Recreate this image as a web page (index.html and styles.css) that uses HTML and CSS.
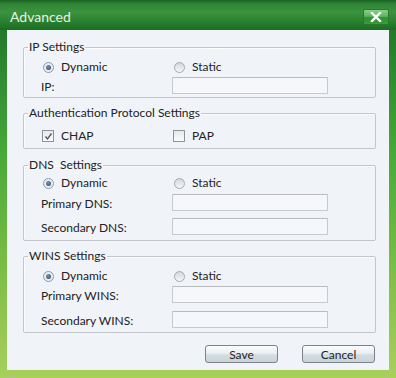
FILE: index.html
```html
<!DOCTYPE html>
<html lang="en">
<head>
    <meta charset="UTF-8">
    <meta name="viewport" content="width=device-width, initial-scale=1.0">
    <title>Advanced</title>
    <link rel="stylesheet" href="styles.css">
</head>
<body>
    <div class="dialog">
        <div class="titlebar">
            <span class="title">Advanced</span>
            <button class="close" type="button">
                <svg width="12" height="10" viewBox="0 0 12 10">
                    <path d="M2 1 L10 9 M10 1 L2 9" stroke="#fff" stroke-width="2.4" stroke-linecap="square"/>
                </svg>
            </button>
        </div>

        <div class="panel">
            <fieldset class="group group-ip">
                <legend>IP Settings</legend>
                <div class="rows">
                    <div class="row opts">
                        <label class="opt"><span class="radio checked"></span>Dynamic</label>
                        <label class="opt"><span class="radio"></span>Static</label>
                    </div>
                    <div class="row field">
                        <span class="label">IP:</span>
                        <span class="input"></span>
                    </div>
                </div>
            </fieldset>

            <fieldset class="group group-auth">
                <legend>Authentication Protocol Settings</legend>
                <div class="rows">
                    <div class="row opts">
                        <label class="opt">
                            <span class="check">
                                <svg width="9" height="9" viewBox="0 0 9 9"><path d="M1.5 4.5 L3.5 7 L7.5 1.5" fill="none" stroke="#555" stroke-width="1.3"/></svg>
                            </span>CHAP
                        </label>
                        <label class="opt"><span class="check"></span>PAP</label>
                    </div>
                </div>
            </fieldset>

            <fieldset class="group group-dns">
                <legend>DNS&nbsp; Settings</legend>
                <div class="rows">
                    <div class="row opts">
                        <label class="opt"><span class="radio checked"></span>Dynamic</label>
                        <label class="opt"><span class="radio"></span>Static</label>
                    </div>
                    <div class="row field">
                        <span class="label">Primary DNS:</span>
                        <span class="input"></span>
                    </div>
                    <div class="row field">
                        <span class="label">Secondary DNS:</span>
                        <span class="input"></span>
                    </div>
                </div>
            </fieldset>

            <fieldset class="group group-wins">
                <legend>WINS Settings</legend>
                <div class="rows">
                    <div class="row opts">
                        <label class="opt"><span class="radio checked"></span>Dynamic</label>
                        <label class="opt"><span class="radio"></span>Static</label>
                    </div>
                    <div class="row field">
                        <span class="label">Primary WINS:</span>
                        <span class="input"></span>
                    </div>
                    <div class="row field">
                        <span class="label">Secondary WINS:</span>
                        <span class="input"></span>
                    </div>
                </div>
            </fieldset>

            <div class="actions">
                <button class="btn" type="button">Save</button>
                <button class="btn" type="button">Cancel</button>
            </div>
        </div>
    </div>
</body>
</html>
```

FILE: styles.css
```css
/* General Styles */
body {
    margin: 0;
    padding: 0;
    font-family: 'Lato', 'Open Sans', sans-serif;
    color: #222;
}

.dialog {
    width: 396px;
    height: 378px;
    box-sizing: border-box;
    background: linear-gradient(to bottom, #1d6b24 0, #2b8530 60px, #46a838 150px, #78bc45 260px, #a9cf5c 378px);
    overflow: hidden;
}

/* Title bar */
.titlebar {
    height: 30px;
    box-sizing: border-box;
    padding: 4px 7px 0 10px;
    display: flex;
    align-items: center;
    justify-content: space-between;
    background: linear-gradient(to bottom, #1c6322 0, #2f8636 4px, #3b923f 12px, #2c8431 20px, #1b6d21 30px);
}

.title {
    font-size: 14px;
    color: #e4f3e4;
    line-height: 16px;
}

.close {
    width: 26px;
    height: 16px;
    padding: 0;
    border: 1px solid #2a7a2e;
    border-radius: 2px;
    background: linear-gradient(to bottom, #8fd08c 0, #5cb35e 45%, #2f9035 55%, #3a9c3c 100%);
    display: flex;
    align-items: center;
    justify-content: center;
}

/* Content panel */
.panel {
    margin: 0 7px;
    height: 340px;
    box-sizing: border-box;
    padding: 10px 13px 0 16px;
    background: #f0f4f9;
}

.group {
    margin: 0;
    padding: 6px 0 3px 4px;
    border: 1px solid #c3c7cb;
    border-radius: 2px;
    box-shadow: inset 1px 1px 0 #fbfcfe;
    min-width: 0;
}

.group legend {
    padding: 0 1px;
    font-size: 12px;
    line-height: 14px;
}

.group-ip { margin-bottom: 8px; }
.group-auth { padding-top: 9px; padding-bottom: 5px; margin-bottom: 9px; }
.group-dns { padding-top: 4px; padding-bottom: 5px; margin-bottom: 8px; }
.group-wins { padding-bottom: 4px; margin-bottom: 12px; }

.rows {
    padding-left: 13px;
    display: flex;
    flex-direction: column;
    gap: 7px;
}

.group-ip .rows,
.group-wins .rows {
    gap: 3px;
}

.group-dns .row.opts { margin-bottom: -3px; }
.group-wins .row.field + .row.field { margin-top: 5px; }

.row {
    display: grid;
    grid-template-columns: 131px 156px;
    font-size: 12px;
}

.row.opts {
    height: 14px;
    align-items: center;
}

.row.field {
    height: 17px;
}

.opt {
    display: flex;
    align-items: center;
    line-height: 14px;
}

.label {
    align-self: end;
    line-height: 14px;
}

/* Radio buttons */
.radio {
    width: 9px;
    height: 9px;
    margin: 0 7px 0 2px;
    border: 1px solid #a6a9ad;
    border-radius: 50%;
    background: linear-gradient(to bottom, #d5d7d9, #f5f6f7);
    position: relative;
}

.radio.checked {
    border-color: #8d99a6;
    background: #e9eef4;
}

.radio.checked::after {
    content: "";
    position: absolute;
    left: 2px;
    top: 2px;
    width: 5px;
    height: 5px;
    border-radius: 50%;
    background: radial-gradient(circle at 40% 35%, #7d93ad, #2e4461);
}

/* Checkboxes */
.check {
    width: 10px;
    height: 10px;
    margin: 0 7px 0 1px;
    border: 1px solid #8e9398;
    background: linear-gradient(to bottom, #e6e8ea, #fbfbfc);
    display: flex;
    align-items: center;
    justify-content: center;
}

/* Text boxes */
.input {
    height: 17px;
    box-sizing: border-box;
    border: 1px solid #c6cace;
    border-top-color: #b8bcc0;
    border-radius: 1px;
    background: #f5f7fa;
}

/* Buttons */
.actions {
    display: flex;
    justify-content: flex-end;
    gap: 24px;
    padding-right: 1px;
}

.btn {
    width: 73px;
    height: 18px;
    padding: 0;
    font-family: 'Lato', 'Open Sans', sans-serif;
    font-size: 12px;
    color: #1e1e1e;
    border: 1px solid #7c8388;
    border-radius: 3px;
    background: linear-gradient(to bottom, #fbfcfd 0, #eaeff2 45%, #d3dde1 55%, #c9d4d8 100%);
    cursor: pointer;
}
```
